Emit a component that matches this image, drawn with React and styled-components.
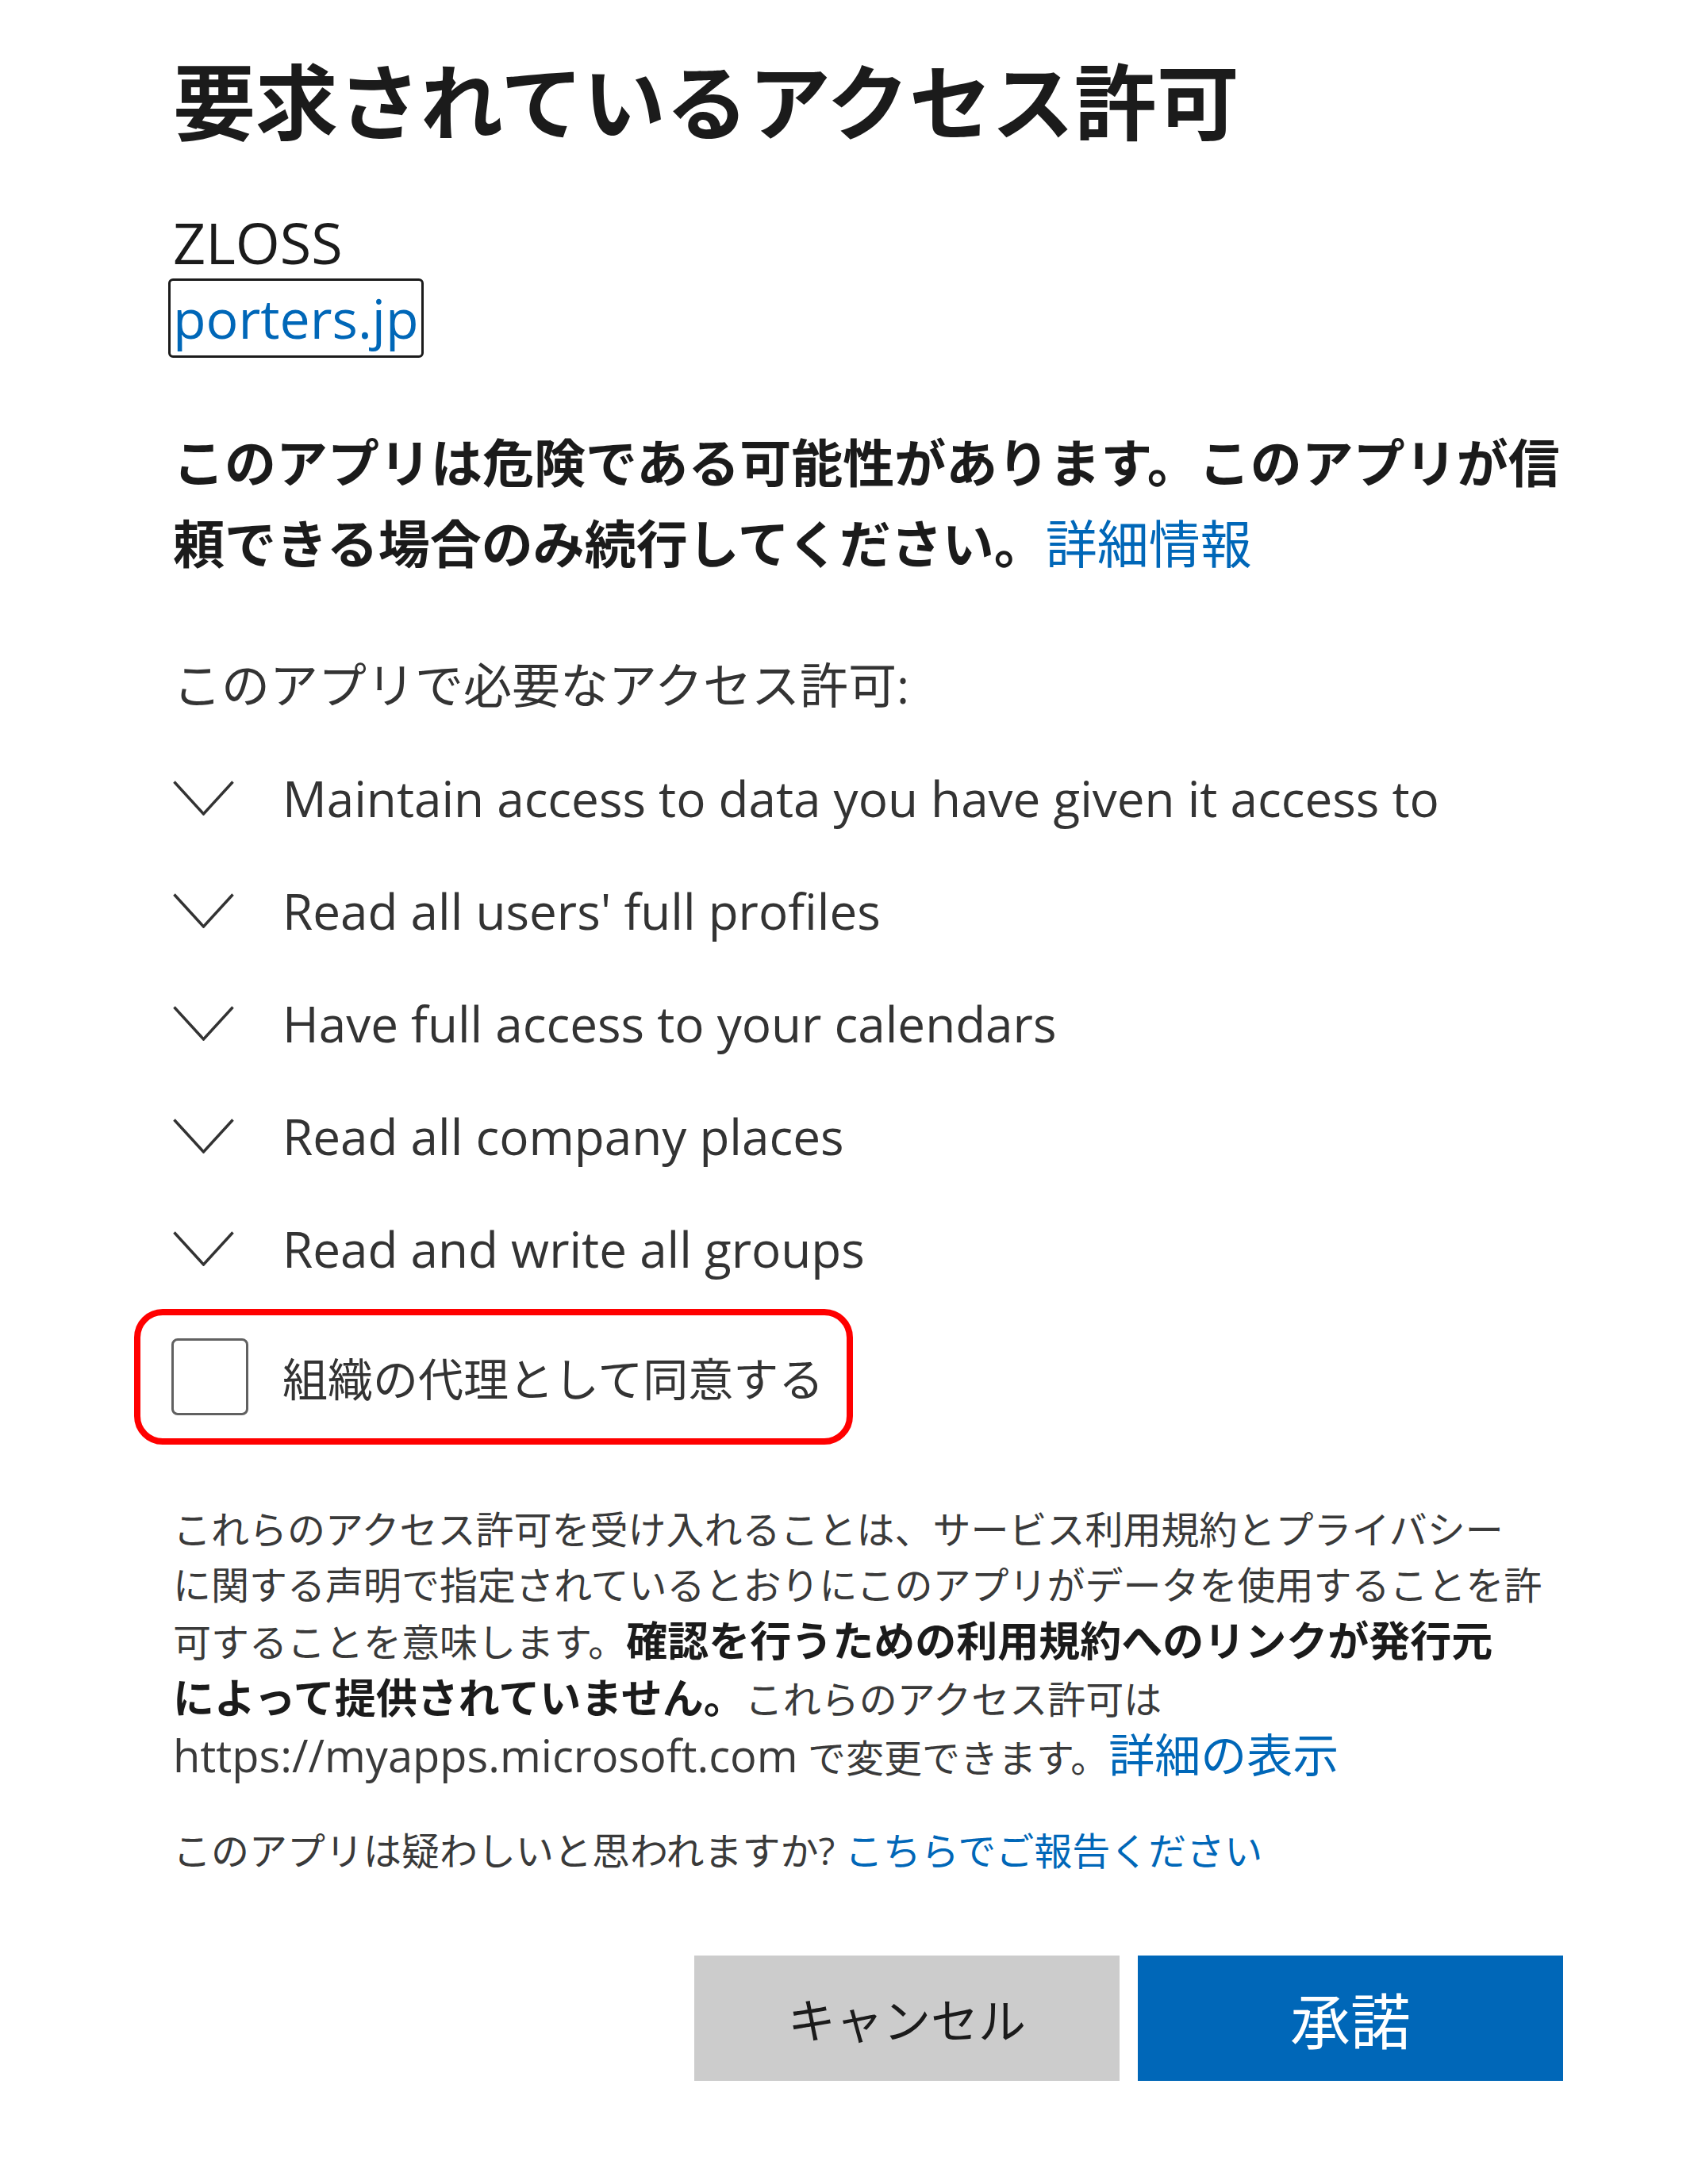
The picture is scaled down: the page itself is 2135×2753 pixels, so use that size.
import React from 'react';
import styled, { createGlobalStyle } from 'styled-components';

const permissions = [
  'Maintain access to data you have given it access to',
  "Read all users' full profiles",
  'Have full access to your calendars',
  'Read all company places',
  'Read and write all groups',
];

export default function App() {
  return (
    <>
      <GlobalStyle />
      <Page>
        <Title>要求されているアクセス許可</Title>
        <AppName>ZLOSS</AppName>
        <Publisher href="#">porters.jp</Publisher>

        <Warning>
          このアプリは危険である可能性があります。このアプリが信
          <br />
          頼できる場合のみ続行してください。<Link href="#">詳細情報</Link>
        </Warning>

        <SubHeading>このアプリで必要なアクセス許可:</SubHeading>
        <PermissionList>
          {permissions.map((text) => (
            <Permission key={text}>
              <Chevron />
              <span>{text}</span>
            </Permission>
          ))}
        </PermissionList>

        <ConsentBox>
          <CheckBox type="checkbox" />
          <ConsentLabel>組織の代理として同意する</ConsentLabel>
        </ConsentBox>

        <Notice>
          これらのアクセス許可を受け入れることは、サービス利用規約とプライバシー
          <br />
          に関する声明で指定されているとおりにこのアプリがデータを使用することを許
          <br />
          可することを意味します。<strong>確認を行うための利用規約へのリンクが発行元</strong>
          <br />
          <strong>によって提供されていません。</strong>これらのアクセス許可は
          <br />
          <Url>https://myapps.microsoft.com</Url> で変更できます。<NoticeLink href="#">詳細の表示</NoticeLink>
        </Notice>

        <Report>
          このアプリは疑わしいと思われますか? <Link href="#">こちらでご報告ください</Link>
        </Report>

        <Actions>
          <Button type="button">キャンセル</Button>
          <Button type="button" $primary>承諾</Button>
        </Actions>
      </Page>
    </>
  );
}

const Chevron = () => (
  <svg width="77" height="44" viewBox="0 0 77 44" fill="none">
    <polyline points="1.5,1.5 38.5,42 75.5,1.5" stroke="#333" strokeWidth="3.5" />
  </svg>
);

const GlobalStyle = createGlobalStyle`
  body {
    margin: 0;
    background: #fff;
    font-family: "Open Sans", "Noto Sans CJK JP", sans-serif;
    color: #1b1b1b;
  }
`;

const Page = styled.main`
  width: 1752px;
  padding: 71px 0 137px 218px;
  display: flex;
  flex-direction: column;
  align-items: flex-start;
`;

const Title = styled.h1`
  margin: 0;
  font-size: 104px;
  line-height: 115px;
  font-weight: 700;
  color: #1b1b1b;
  white-space: nowrap;
`;

const AppName = styled.div`
  margin-top: 79px;
  font-size: 72px;
  line-height: 80px;
`;

const Publisher = styled.a`
  margin: 6px 0 0 -6px;
  display: inline-block;
  padding: 0 3px;
  border: 3px solid #1b1b1b;
  border-radius: 6px;
  font-size: 68px;
  line-height: 94px;
  color: #0067b8;
  text-decoration: none;
`;

const Link = styled.a`
  color: #0067b8;
  font-weight: 400;
  text-decoration: none;
`;

const NoticeLink = styled(Link)`
  font-size: 58px;
`;

const Warning = styled.p`
  margin: 81px 0 0;
  font-size: 65px;
  line-height: 102px;
  font-weight: 700;
  color: #1b1b1b;
  white-space: nowrap;
`;

const SubHeading = styled.h2`
  margin: 88px 0 0;
  font-size: 61px;
  line-height: 80px;
  font-weight: 400;
  color: #333;
`;

const PermissionList = styled.ul`
  margin: 31px 0 0;
  padding: 0;
  list-style: none;
`;

const Permission = styled.li`
  display: flex;
  align-items: center;
  gap: 61px;
  height: 142px;
  font-size: 62px;
  color: #333;
`;

const ConsentBox = styled.label`
  margin: 5px 0 0 -49px;
  display: flex;
  align-items: center;
  gap: 43px;
  box-sizing: border-box;
  width: 906px;
  height: 171px;
  padding: 0 0 0 39px;
  border: 8px solid #ff0000;
  border-radius: 36px;
`;

const CheckBox = styled.input`
  appearance: none;
  margin: 0;
  width: 97px;
  height: 97px;
  box-sizing: border-box;
  border: 3px solid #616161;
  border-radius: 8px;
  background: #fff;
`;

const ConsentLabel = styled.span`
  font-size: 57px;
  color: #333;
`;

const Notice = styled.p`
  margin: 72px 0 0;
  font-size: 48px;
  line-height: 70px;
  color: #3a3a3a;
  white-space: nowrap;

  strong {
    font-size: 52px;
    font-weight: 700;
    color: #1b1b1b;
  }
`;

const Url = styled.span`
  font-size: 56px;
`;

const Report = styled.p`
  margin: 47px 0 0;
  font-size: 48px;
  line-height: 70px;
  color: #3a3a3a;
`;

const Actions = styled.div`
  align-self: stretch;
  display: flex;
  justify-content: flex-end;
  gap: 23px;
  margin-top: 97px;
`;

const Button = styled.button`
  width: 536px;
  height: 158px;
  border: none;
  font-family: inherit;
  font-size: ${(p) => (p.$primary ? '76px' : '60px')};
  background: ${(p) => (p.$primary ? '#0067b8' : '#cccccc')};
  color: ${(p) => (p.$primary ? '#fff' : '#1b1b1b')};
`;
